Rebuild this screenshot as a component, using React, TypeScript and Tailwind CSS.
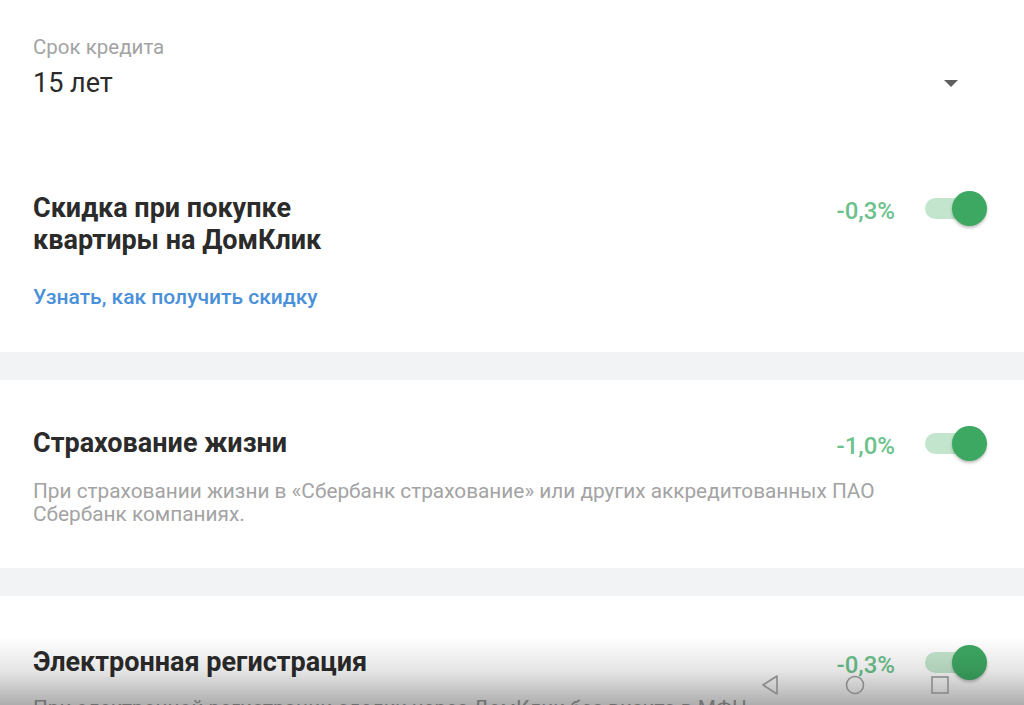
import React from "react";

const font = { fontFamily: "Roboto, 'Noto Sans', sans-serif" };

function Toggle() {
  return (
    <div className="relative w-[62px] h-[35px] flex items-center">
      <div className="w-[58px] h-[21px] rounded-full bg-[#c3e5cd]" />
      <div className="absolute right-0 top-0 w-[35px] h-[35px] rounded-full bg-[#3da862] shadow-[0_2px_3px_rgba(0,0,0,0.25)]" />
    </div>
  );
}

function OptionRow({ title, percent }: { title: React.ReactNode; percent: string }) {
  return (
    <div className="flex justify-between items-start">
      <div className="text-[27px] leading-[32px] font-bold text-[#2b2b2b]">{title}</div>
      <div className="flex items-center gap-[30px] h-[32px] mr-[4px]">
        <span className="text-[24px] font-medium text-[#6cc28c] mt-[6px]">{percent}</span>
        <Toggle />
      </div>
    </div>
  );
}

export default function App() {
  return (
    <div className="relative w-[1024px] h-[705px] overflow-hidden bg-white" style={font}>
      {/* term + first option */}
      <div className="px-[33px] pt-[36px] h-[352px]">
        <div className="text-[20.5px] leading-[22px] text-[#a3a3a3]">Срок кредита</div>
        <div className="flex justify-between items-center mt-[11px] h-[28px]">
          <span className="text-[27px] text-[#2b2b2b]">15 лет</span>
          <svg width="14" height="8" viewBox="0 0 14 8" className="mr-[33px] mt-[2px]">
            <path d="M0 0 L14 0 L7 7 Z" fill="#5f5f5f" />
          </svg>
        </div>
        <div className="mt-[95px]">
          <OptionRow
            title={
              <>
                Скидка при покупке
                <br />
                квартиры на ДомКлик
              </>
            }
            percent="-0,3%"
          />
        </div>
        <div className="mt-[29px] text-[21px] leading-[24px] font-medium text-[#4a90d9]">
          Узнать, как получить скидку
        </div>
      </div>

      <div className="h-[28px] bg-[#f2f3f5]" />

      <div className="px-[33px] pt-[47px] h-[188px]">
        <OptionRow title="Страхование жизни" percent="-1,0%" />
        <div className="mt-[21px] text-[20.8px] leading-[23px] text-[#a3a3a3] max-w-[880px]">
          При страховании жизни в «Сбербанк страхование» или других аккредитованных ПАО Сбербанк компаниях.
        </div>
      </div>

      <div className="h-[28px] bg-[#f2f3f5]" />

      <div className="px-[33px] pt-[50px]">
        <OptionRow title="Электронная регистрация" percent="-0,3%" />
        <div className="mt-[19px] text-[20.8px] leading-[23px] text-[#a3a3a3] max-w-[880px]">
          При электронной регистрации сделки через ДомКлик без визита в МФЦ.
        </div>
      </div>

      {/* system navigation bar overlay */}
      <div className="absolute left-0 right-0 bottom-0 h-[68px] bg-gradient-to-b from-[rgba(0,0,0,0)] via-[rgba(0,0,0,0.1)] to-[rgba(0,0,0,0.32)] flex items-end justify-end pb-[9px]">
        <div className="flex items-center gap-[64px] mr-[74px]">
          <svg width="20" height="22" viewBox="0 0 20 22">
            <path d="M17 2 L3 11 L17 20 Z" fill="none" stroke="#8a8a8a" strokeWidth="1.6" strokeLinejoin="round" />
          </svg>
          <svg width="22" height="22" viewBox="0 0 22 22">
            <circle cx="11" cy="11" r="8.5" fill="none" stroke="#8a8a8a" strokeWidth="1.6" />
          </svg>
          <svg width="20" height="20" viewBox="0 0 20 20">
            <rect x="2" y="2" width="16" height="16" fill="none" stroke="#8a8a8a" strokeWidth="1.6" />
          </svg>
        </div>
      </div>
    </div>
  );
}
